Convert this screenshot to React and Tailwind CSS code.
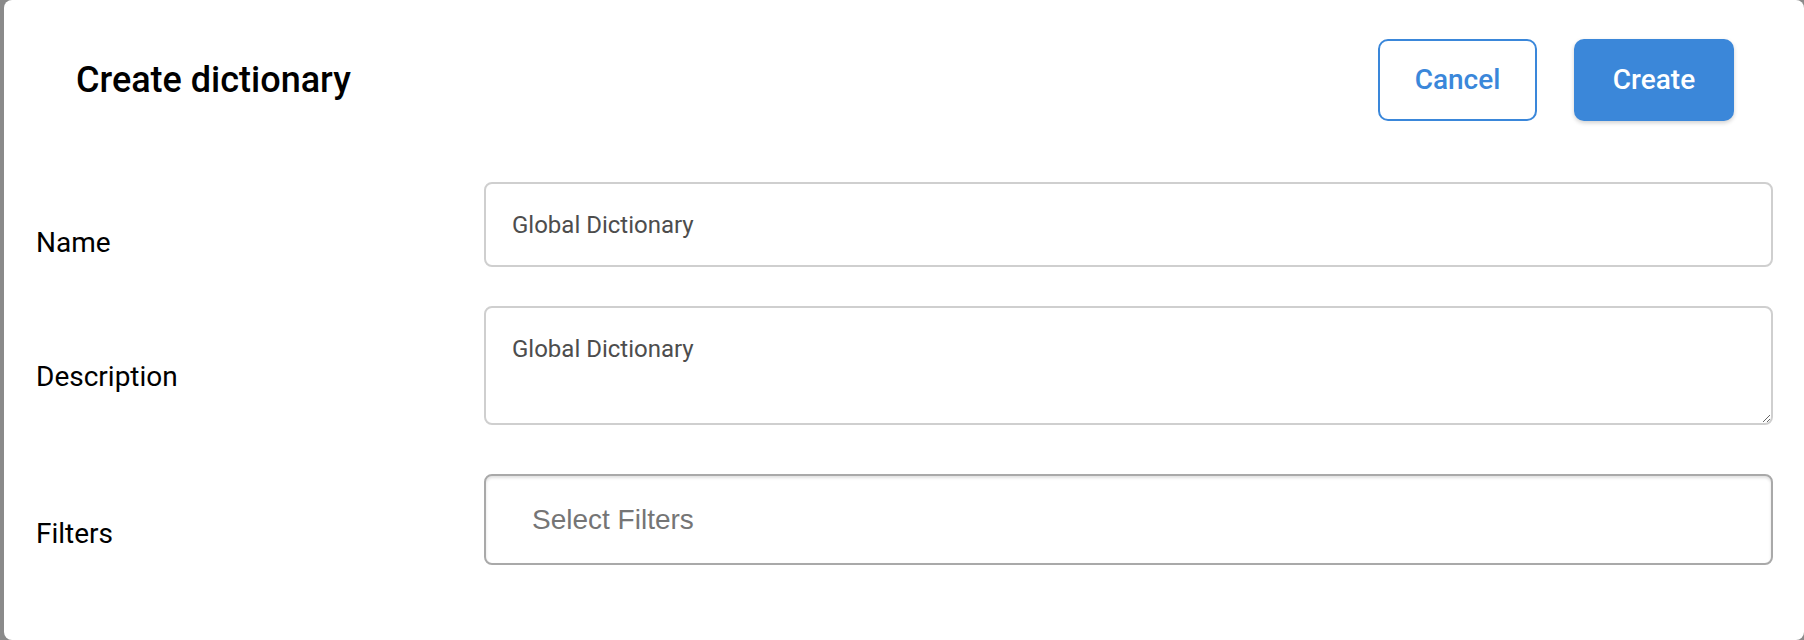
import { useState } from "react";

export default function App() {
  const [name, setName] = useState("Global Dictionary");
  const [desc, setDesc] = useState("Global Dictionary");

  return (
    <div className="h-[640px] w-full bg-[#8a8a8a] pl-1 font-['Roboto',sans-serif]">
      <div className="h-full rounded-lg bg-white">
        {/* Header */}
        <div className="flex items-center justify-between pl-[72px] pr-[70px] pt-[39px]">
          <h1 className="text-[36px] font-medium text-black">Create dictionary</h1>
          <div className="flex gap-[37px]">
            <button className="h-[82px] w-[159px] rounded-[10px] border-2 border-[#3a87da] bg-white text-[28px] font-medium text-[#3a87da]">
              Cancel
            </button>
            <button className="h-[82px] w-[160px] rounded-[10px] bg-[#3b87d9] text-[28px] font-medium text-white shadow-[0_2px_4px_rgba(0,0,0,0.18)]">
              Create
            </button>
          </div>
        </div>

        {/* Form */}
        <div className="mt-[61px] pl-[32px] pr-[31px]">
          <div className="grid grid-cols-[448px_1fr] items-center">
            <label className="pt-[36px] text-[28px] text-black">Name</label>
            <input
              value={name}
              onChange={(e) => setName(e.target.value)}
              className="h-[85px] w-full rounded-lg border-2 border-[#cfcfcf] px-[26px] text-[24px] text-[#4d4d4d] outline-none"
            />
          </div>

          <div className="mt-[39px] grid grid-cols-[448px_1fr] items-center">
            <label className="pt-[22px] text-[28px] text-black">Description</label>
            <textarea
              value={desc}
              onChange={(e) => setDesc(e.target.value)}
              className="h-[119px] w-full rounded-lg border-2 border-[#cfcfcf] px-[26px] pt-[25px] text-[24px] leading-[1.4] text-[#4d4d4d] outline-none"
            />
          </div>

          <div className="mt-[49px] grid grid-cols-[448px_1fr] items-center">
            <label className="pt-[28px] text-[28px] text-black">Filters</label>
            <div className="flex h-[91px] w-full items-center rounded-lg border-2 border-[#a9a9a9] px-[46px] shadow-[inset_0_2px_3px_rgba(0,0,0,0.12)]">
              <span className="font-['Liberation_Sans',sans-serif] text-[28px] text-[#757575]">
                Select Filters
              </span>
            </div>
          </div>
        </div>
      </div>
    </div>
  );
}
